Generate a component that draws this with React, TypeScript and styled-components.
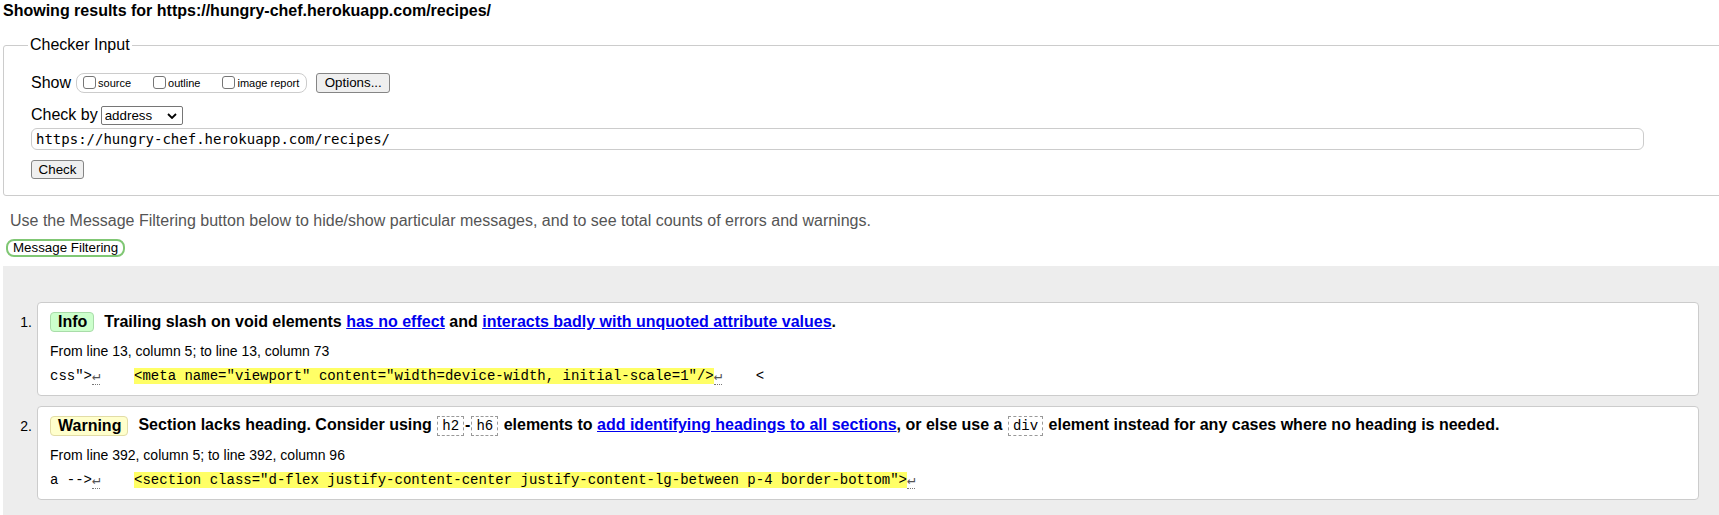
import styled, { createGlobalStyle } from "styled-components";

const GlobalStyle = createGlobalStyle`
  html, body {
    margin: 0;
    padding: 0;
    background: #fff;
  }
  body {
    overflow: hidden;
    font-family: "Liberation Sans", Arial, sans-serif;
    color: #000;
  }
`;

const Page = styled.div`
  width: 100%;
  overflow: hidden;
  padding-bottom: 20px;
`;

const Title = styled.h2`
  margin: 0;
  padding: 2px 3px 0;
  font-size: 16px;
  line-height: 18px;
  font-weight: bold;
`;

const CheckerFieldset = styled.fieldset`
  margin: 16px -20px 0 3px;
  padding: 18px 0 16px 27px;
  border: 1px solid #ccc;
  border-radius: 3px;
  min-width: 0;
`;

const Legend = styled.legend`
  margin-left: -3px;
  padding: 0 2px;
  font-size: 16px;
  line-height: 18px;
`;

const Row = styled.div<{ $gap?: number; $height: number }>`
  display: flex;
  align-items: center;
  height: ${(p) => p.$height}px;
  margin-top: ${(p) => p.$gap ?? 0}px;
  font-size: 16px;
`;

const OptionGroup = styled.div`
  display: flex;
  align-items: flex-end;
  height: 20px;
  box-sizing: border-box;
  margin-left: 5px;
  padding: 0 7px 3px 6px;
  border: 1px solid #ccc;
  border-radius: 8px;
`;

const OptionLabel = styled.label<{ $last?: boolean }>`
  display: flex;
  align-items: flex-end;
  margin-right: ${(p) => (p.$last ? 0 : 22)}px;
  font-size: 11px;
  line-height: 12px;
`;

const Box = styled.input`
  appearance: none;
  width: 13px;
  height: 13px;
  margin: 0 2px 0 0;
  border: 1px solid #767676;
  border-radius: 3px;
  background: #fff;
`;

const Button = styled.button<{ $width: number; $height: number; $left?: number }>`
  width: ${(p) => p.$width}px;
  height: ${(p) => p.$height}px;
  margin-left: ${(p) => p.$left ?? 0}px;
  padding: 0;
  border: 1px solid #858585;
  border-radius: 3px;
  background: #efefef;
  color: #000;
  font-family: "Liberation Sans", Arial, sans-serif;
  font-size: 13.33px;
`;

const CheckButton = styled(Button)`
  display: block;
  margin-top: 10px;
`;

const SelectWrap = styled.span`
  position: relative;
  display: inline-flex;
  margin-left: 3px;
`;

const Select = styled.select`
  appearance: none;
  width: 82px;
  height: 19px;
  padding: 0 0 0 3px;
  border: 1px solid #767676;
  border-radius: 2px;
  background: #fff;
  color: #000;
  font-family: "Liberation Sans", Arial, sans-serif;
  font-size: 13.33px;
`;

const Chevron = styled.svg`
  position: absolute;
  right: 6px;
  top: 7px;
  pointer-events: none;
`;

const UrlInput = styled.input`
  display: block;
  box-sizing: border-box;
  width: 1613px;
  height: 22px;
  margin-top: 3px;
  padding: 0 4px;
  border: 1px solid #ccc;
  border-radius: 6px;
  font-family: "DejaVu Sans Mono", "Liberation Mono", monospace;
  font-size: 14px;
  color: #000;
`;

const Note = styled.p`
  margin: 16px 0 0;
  padding-left: 10px;
  font-size: 16px;
  line-height: 18px;
  color: #555;
`;

const FilterButton = styled.button`
  display: block;
  box-sizing: border-box;
  height: 18px;
  margin: 9px 0 0 6px;
  padding: 0 5px;
  border: 2px solid #80c774;
  border-radius: 8px;
  background: #fff;
  color: #000;
  font-family: "Liberation Sans", Arial, sans-serif;
  font-size: 13.33px;
  line-height: 14px;
`;

const Results = styled.div`
  margin: 9px 0 0 3px;
  padding: 36px 20px 40px 0;
  background: #ededed;
`;

const MessageList = styled.ol`
  display: flex;
  flex-direction: column;
  gap: 10px;
  margin: 0;
  padding: 0;
  list-style: none;
`;

const Item = styled.li`
  display: flex;
  align-items: flex-start;
`;

const Number = styled.span`
  width: 34px;
  box-sizing: border-box;
  padding: 11px 5px 0 0;
  text-align: right;
  font-size: 14px;
  line-height: 18px;
`;

const Card = styled.div`
  flex: 1;
  padding: 9px 12px 10px;
  background: #fff;
  border: 1px solid #ccc;
  border-radius: 4px;
`;

const Headline = styled.div`
  display: flex;
  align-items: center;
  height: 20px;
  font-size: 16px;
  font-weight: bold;
  white-space: nowrap;
`;

const Badge = styled.span<{ $kind: "info" | "warning" }>`
  box-sizing: border-box;
  height: 20px;
  padding: 0 6px 0 7px;
  margin-right: 10px;
  line-height: 18px;
  border-radius: 4px;
  border: 1px solid ${(p) => (p.$kind === "info" ? "#a9dca9" : "#e2dca6")};
  background: ${(p) => (p.$kind === "info" ? "#ccffcc" : "#ffffcc")};
`;

const Link = styled.a`
  color: #0000ee;
  text-decoration: underline;
`;

const Code = styled.code`
  display: inline-block;
  padding: 1px 4px;
  margin: 0 1px;
  border: 1px dashed #999;
  font-family: "Liberation Mono", "Courier New", monospace;
  font-size: 14px;
  font-weight: normal;
  line-height: 16px;
  vertical-align: middle;
`;

const Location = styled.p`
  margin: 10px 0 0;
  font-size: 14px;
  line-height: 18px;
`;

const Extract = styled.p`
  margin: 7px 0 0;
  font-family: "Liberation Mono", "Courier New", monospace;
  font-size: 14px;
  line-height: 18px;
  white-space: pre;
`;

const Mark = styled.span`
  background: #ffff66;
`;

const Lf = styled.span`
  color: #555;
  border-bottom: 1px dotted #777;
`;

const NL = () => <Lf>↵</Lf>;

export default function App() {
  return (
    <Page>
      <GlobalStyle />
      <Title>Showing results for https://hungry-chef.herokuapp.com/recipes/</Title>

      <CheckerFieldset>
        <Legend>Checker Input</Legend>
        <Row $height={21}>
          <span>Show</span>
          <OptionGroup>
            <OptionLabel>
              <Box type="checkbox" />
              source
            </OptionLabel>
            <OptionLabel>
              <Box type="checkbox" />
              outline
            </OptionLabel>
            <OptionLabel $last>
              <Box type="checkbox" />
              image report
            </OptionLabel>
          </OptionGroup>
          <Button $width={74} $height={20} $left={9}>
            Options...
          </Button>
        </Row>
        <Row $height={20} $gap={12}>
          <span>Check by</span>
          <SelectWrap>
            <Select defaultValue="address">
              <option value="address">address</option>
            </Select>
            <Chevron width="10" height="6" viewBox="0 0 10 6">
              <path d="M1 1l4 4 4-4" fill="none" stroke="#000" strokeWidth="1.8" />
            </Chevron>
          </SelectWrap>
        </Row>
        <UrlInput readOnly defaultValue="https://hungry-chef.herokuapp.com/recipes/" />
        <CheckButton $width={53} $height={19}>
          Check
        </CheckButton>
      </CheckerFieldset>

      <Note>
        Use the Message Filtering button below to hide/show particular messages, and to see total counts of
        errors and warnings.
      </Note>
      <FilterButton>Message Filtering</FilterButton>

      <Results>
        <MessageList>
          <Item>
            <Number>1.</Number>
            <Card>
              <Headline>
                <Badge $kind="info">Info</Badge>
                <span>
                  Trailing slash on void elements <Link href="#">has no effect</Link> and{" "}
                  <Link href="#">interacts badly with unquoted attribute values</Link>.
                </span>
              </Headline>
              <Location>From line 13, column 5; to line 13, column 73</Location>
              <Extract>
                css"&gt;
                <NL />
                {"    "}
                <Mark>&lt;meta name="viewport" content="width=device-width, initial-scale=1"/&gt;</Mark>
                <NL />
                {"    <"}
              </Extract>
            </Card>
          </Item>
          <Item>
            <Number>2.</Number>
            <Card>
              <Headline>
                <Badge $kind="warning">Warning</Badge>
                <span>
                  Section lacks heading. Consider using <Code>h2</Code>-<Code>h6</Code> elements to{" "}
                  <Link href="#">add identifying headings to all sections</Link>, or else use a <Code>div</Code>{" "}
                  element instead for any cases where no heading is needed.
                </span>
              </Headline>
              <Location>From line 392, column 5; to line 392, column 96</Location>
              <Extract>
                a --&gt;
                <NL />
                {"    "}
                <Mark>
                  &lt;section class="d-flex justify-content-center justify-content-lg-between p-4 border-bottom"&gt;
                </Mark>
                <NL />
              </Extract>
            </Card>
          </Item>
        </MessageList>
      </Results>
    </Page>
  );
}
